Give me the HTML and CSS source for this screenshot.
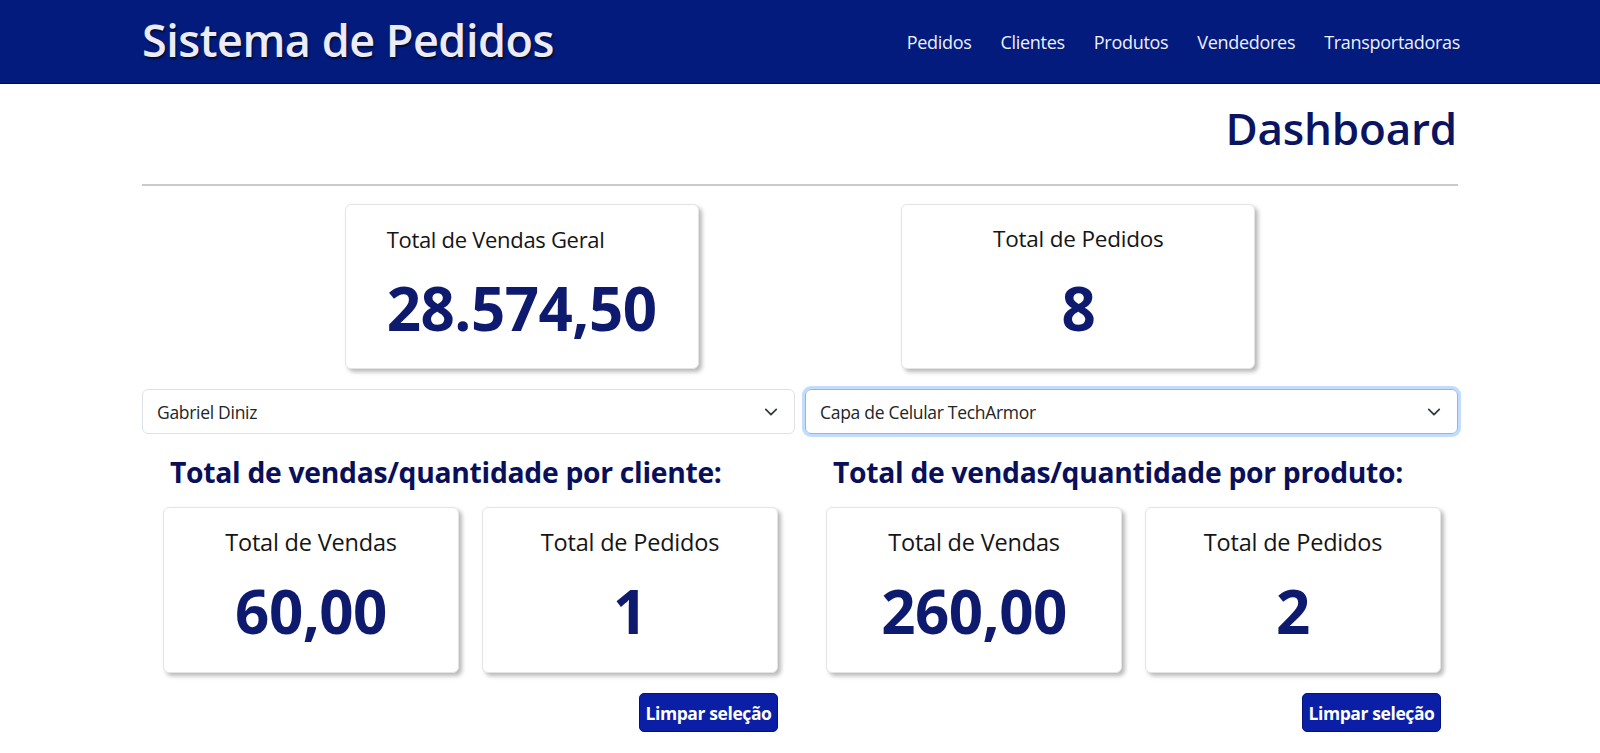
FILE: index.html
```html
<!DOCTYPE html>
<html lang="pt-BR">
<head>
<meta charset="utf-8">
<title>Sistema de Pedidos</title>
<link rel="stylesheet" href="styles.css">
</head>
<body>
<header class="navbar">
  <div class="nav-inner">
    <div class="brand">Sistema de Pedidos</div>
    <nav class="nav-links">
      <a href="#">Pedidos</a>
      <a href="#">Clientes</a>
      <a href="#">Produtos</a>
      <a href="#">Vendedores</a>
      <a href="#">Transportadoras</a>
    </nav>
  </div>
</header>
<main class="container">
  <h1 class="page-title">Dashboard</h1>
  <hr class="divider">
  <section class="top-cards">
    <div class="card card-left">
      <div class="card-label">Total de Vendas Geral</div>
      <div class="card-value">28.574,50</div>
    </div>
    <div class="card">
      <div class="card-label">Total de Pedidos</div>
      <div class="card-value">8</div>
    </div>
  </section>
  <section class="selects">
    <div class="select">
      <span>Gabriel Diniz</span>
      <svg class="chev" viewBox="0 0 16 16" width="16" height="16"><path d="M2 5l6 6 6-6" fill="none" stroke="#343a40" stroke-width="2" stroke-linecap="round" stroke-linejoin="round"/></svg>
    </div>
    <div class="select focused">
      <span>Capa de Celular TechArmor</span>
      <svg class="chev" viewBox="0 0 16 16" width="16" height="16"><path d="M2 5l6 6 6-6" fill="none" stroke="#343a40" stroke-width="2" stroke-linecap="round" stroke-linejoin="round"/></svg>
    </div>
  </section>
  <section class="groups">
    <div class="group">
      <h2 class="group-title">Total de vendas/quantidade por cliente:</h2>
      <div class="sub-cards">
        <div class="card sub">
          <div class="card-label">Total de Vendas</div>
          <div class="card-value">60,00</div>
        </div>
        <div class="card sub">
          <div class="card-label">Total de Pedidos</div>
          <div class="card-value">1</div>
        </div>
      </div>
      <div class="actions"><button class="btn">Limpar seleção</button></div>
    </div>
    <div class="group">
      <h2 class="group-title">Total de vendas/quantidade por produto:</h2>
      <div class="sub-cards">
        <div class="card sub">
          <div class="card-label">Total de Vendas</div>
          <div class="card-value">260,00</div>
        </div>
        <div class="card sub">
          <div class="card-label">Total de Pedidos</div>
          <div class="card-value">2</div>
        </div>
      </div>
      <div class="actions"><button class="btn">Limpar seleção</button></div>
    </div>
  </section>
</main>
</body>
</html>
```
FILE: styles.css
```css
* { box-sizing: border-box; }
html, body { margin: 0; padding: 0; }
body {
  font-family: "Open Sans", "Noto Sans", sans-serif;
  background: #ffffff;
  color: #111;
}
.navbar {
  background: #021b7c;
  height: 84px;
  border-bottom: 1px solid #000a3a;
}
.nav-inner {
  width: 1316px;
  margin: 0 auto;
  height: 100%;
  display: flex;
  align-items: center;
  justify-content: space-between;
}
.brand {
  font-size: 45px;
  font-weight: 600;
  color: #ecebf7;
  letter-spacing: -0.5px;
  text-shadow: 1px 2px 2px rgba(0,0,0,0.6);
  margin-top: -4px;
}
.nav-links {
  display: flex;
  gap: 29px;
  margin-right: -2px;
}
.nav-links a {
  color: #eef0fa;
  text-decoration: none;
  font-size: 18px;
  letter-spacing: -0.3px;
}
.container {
  width: 1316px;
  margin: 0 auto;
}
.page-title {
  margin: 0;
  padding-top: 18px;
  text-align: right;
  font-size: 44px;
  font-weight: 600;
  color: #0b1461;
  line-height: 52px;
  letter-spacing: -0.2px;
  padding-right: 1px;
}
.divider {
  margin: 30px 0 0 0;
  border: 0;
  height: 2px;
  background: #c9c9c9;
}
.top-cards {
  display: flex;
  justify-content: space-evenly;
  margin-top: 18px;
}
.card {
  background: #fff;
  border: 1px solid #e4e4e4;
  border-radius: 6px;
  box-shadow: 3px 3px 4px rgba(0,0,0,0.28);
  text-align: center;
}
.top-cards .card {
  width: 354px;
  height: 165px;
  padding-top: 19px;
}
.card.card-left {
  text-align: left;
  padding-left: 41px;
}
.card-label {
  font-size: 22.5px;
  color: #151515;
  line-height: 30px;
  letter-spacing: -0.2px;
}
.card-left .card-label {
  font-size: 22px;
  letter-spacing: -0.3px;
}
.card.sub .card-label {
  font-size: 23.5px;
}
.card-value {
  font-size: 60px;
  font-weight: 700;
  color: #0d1a6e;
  line-height: 70px;
  margin-top: 19px;
  letter-spacing: -0.5px;
}
.selects {
  display: grid;
  grid-template-columns: 1fr 1fr;
  gap: 10px;
  margin-top: 20px;
}
.select {
  height: 45px;
  border: 1px solid #dee2e6;
  border-radius: 6px;
  display: flex;
  align-items: center;
  justify-content: space-between;
  padding: 0 16px 0 14px;
  font-size: 17.5px;
  color: #212529;
  letter-spacing: -0.3px;
}
.select.focused {
  border-color: #86b7fe;
  box-shadow: 0 0 0 3px rgba(13,110,253,0.25);
}
.chev { width: 14px; height: 14px; }
.groups {
  display: grid;
  grid-template-columns: 1fr 1fr;
  gap: 10px;
}
.group {
  padding: 0 17px 0 21px;
}
.group-title {
  margin: 20px 0 0 7px;
  font-size: 28.3px;
  font-weight: 700;
  color: #0a0f5a;
  line-height: 36px;
  letter-spacing: -0.3px;
}
.sub-cards {
  display: flex;
  gap: 23px;
  margin-top: 17px;
}
.card.sub {
  flex: 1;
  height: 166px;
  padding-top: 19px;
}
.actions {
  display: flex;
  justify-content: flex-end;
  margin-top: 20px;
  padding-right: 0;
}
.btn {
  font-family: "Open Sans", "Noto Sans", sans-serif;
  background: #0a1fa6;
  color: #fff;
  font-weight: 700;
  font-size: 17.5px;
  border: 1px solid #04127a;
  border-radius: 5px;
  height: 39px;
  width: 139px;
  padding: 0;
  letter-spacing: -0.4px;
}
```
